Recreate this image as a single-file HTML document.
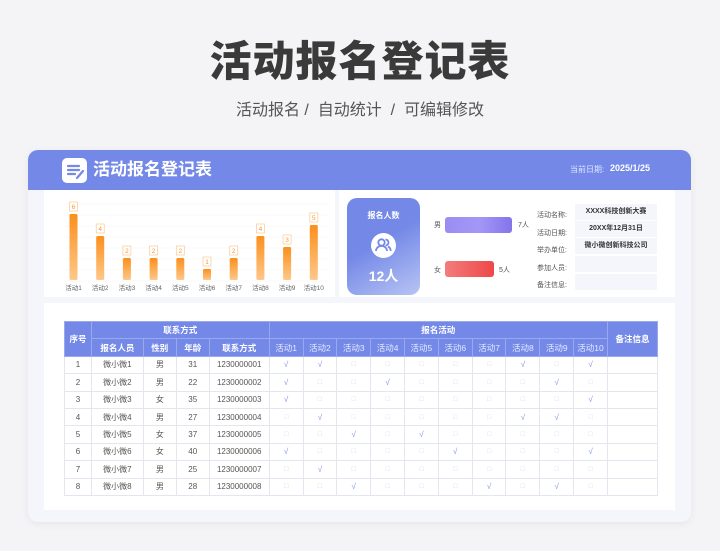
<!DOCTYPE html>
<html><head><meta charset="utf-8"><style>
*{margin:0;padding:0;box-sizing:border-box}
body{width:720px;height:551px;background:#f4f4f6;font-family:"Liberation Sans","Noto Sans CJK SC",sans-serif;position:relative;overflow:hidden}
.a{position:absolute}
.title{left:0;width:720px;top:34px;text-align:center;font-size:42px;font-weight:900;color:#3a3a3a;letter-spacing:1px;line-height:56px}
.sub{left:0;width:720px;top:100px;text-align:center;font-size:16px;color:#555;line-height:22px}
.card{left:28px;top:150px;width:663px;height:372px;background:#f5f6fb;border-radius:10px;overflow:hidden;box-shadow:0 2px 8px rgba(0,0,0,.06)}
.hdr{left:0;top:0;width:663px;height:40px;background:#7489e7}
.panel{background:#fff}
table{border-collapse:collapse;font-size:8px;color:#555}
td,th{border:1px solid #e3e6ee;text-align:center;height:17.4px;padding:0}
th{background:#7489e7;color:#fff;font-weight:bold;border-color:#9aa9ee;font-size:8.5px}
th.n{font-weight:normal;color:#e6eaff}
.ck{color:#7b8ce8}.bx{color:#d8dbe6;font-size:7px}
.lab{font-size:7px;color:#555}
</style></head><body>
<div class="a title">活动报名登记表</div>
<div class="a sub">活动报名 / &nbsp;自动统计 &nbsp;/ &nbsp;可编辑修改</div>
<div class="a card">
 <div class="a hdr">
  <div class="a" style="left:34px;top:8px;width:25px;height:25px;background:#fff;border-radius:5px">
   <svg width="25" height="25" viewBox="0 0 25 25"><path d="M6 8h11M6 12h11M6 16h7" stroke="#7489e7" stroke-width="2.2" stroke-linecap="round"/><path d="M15 20l6-7" stroke="#7489e7" stroke-width="2.2" stroke-linecap="round"/></svg>
  </div>
  <div class="a" style="left:65px;top:8px;font-size:17px;font-weight:bold;color:#fff;line-height:24px">活动报名登记表</div>
  <div class="a" style="left:542px;top:14px;font-size:8px;color:#dfe4ff">当前日期:</div>
  <div class="a" style="left:582px;top:13px;font-size:9px;font-weight:bold;color:#fff">2025/1/25</div>
 </div>
 <div class="a panel" style="left:16px;top:40px;width:291px;height:107px"></div>
 <div class="a panel" style="left:311px;top:40px;width:336px;height:107px"></div>
 <div class="a panel" style="left:16px;top:153px;width:631px;height:207px"></div>
</div>
<svg class="a" style="left:44px;top:190px" width="291" height="106">
 <defs><linearGradient id="og" x1="0" y1="0" x2="0" y2="1"><stop offset="0" stop-color="#fb8f1c"/><stop offset="1" stop-color="#fec889"/></linearGradient></defs>
 <g stroke="#f4f4f4" stroke-width="0.6"><line x1="20" x2="284" y1="14" y2="14"/><line x1="20" x2="284" y1="25" y2="25"/><line x1="20" x2="284" y1="36" y2="36"/><line x1="20" x2="284" y1="47" y2="47"/><line x1="20" x2="284" y1="58" y2="58"/><line x1="20" x2="284" y1="69" y2="69"/><line x1="20" x2="284" y1="80" y2="80"/><line x1="20" x2="284" y1="91" y2="91"/></g>
 <g font-size="6.5" fill="#666" text-anchor="middle" font-family="Liberation Sans,Noto Sans CJK SC,sans-serif">
 <g id="bars"></g>
 </g>
</svg>
<script>
var v=[6,4,2,2,2,1,2,4,3,5],s='';
for(var i=0;i<10;i++){var cx=29.5+i*26.7,h=v[i]*11,t=90-h;
s+='<rect x="'+(cx-4)+'" y="'+t+'" width="8" height="'+h+'" rx="1.5" fill="url(#og)"/>';
s+='<rect x="'+(cx-4)+'" y="'+(t-12)+'" width="8" height="9" fill="#fff" stroke="#fbc98e" stroke-width="0.7"/>';
s+='<text x="'+cx+'" y="'+(t-5)+'" fill="#f59a3a">'+v[i]+'</text>';
s+='<text x="'+cx+'" y="100">活动'+(i+1)+'</text>';}
document.getElementById('bars').innerHTML=s;
</script>
<div class="a" style="left:347px;top:198px;width:73px;height:97px;border-radius:10px;background:linear-gradient(150deg,#7489e7 45%,#b8c4f4)">
 <div class="a" style="left:0;width:73px;top:12px;text-align:center;font-size:8px;color:#fff;font-weight:bold">报名人数</div>
 <div class="a" style="left:24px;top:35px;width:25px;height:25px;border-radius:50%;background:#fff">
  <svg width="25" height="25" viewBox="0 0 25 25" fill="none" stroke="#7489e7" stroke-width="1.8"><circle cx="10.5" cy="9.5" r="3.2"/><path d="M5 18c0-3 2.5-5 5.5-5s5.5 2 5.5 5"/><path d="M14.5 6.5a3 3 0 0 1 0 6M17 13.5c1.5.7 2.7 2.2 2.7 4.5"/></svg>
 </div>
 <div class="a" style="left:0;width:73px;top:68px;text-align:center;font-size:14px;color:#fff;font-weight:bold">12人</div>
</div>
<div class="a lab" style="left:434px;top:220px">男</div>
<div class="a" style="left:445px;top:217px;width:67px;height:16px;border-radius:3px;background:linear-gradient(90deg,#9a8cf3,#a597f7 50%,#8474ea)"></div>
<div class="a lab" style="left:518px;top:220px">7人</div>
<div class="a lab" style="left:434px;top:265px">女</div>
<div class="a" style="left:445px;top:261px;width:49px;height:16px;border-radius:3px;background:linear-gradient(90deg,#f27d7d,#ef4747)"></div>
<div class="a lab" style="left:499px;top:265px">5人</div>
<div class="a" style="left:537px;top:207px;font-size:7px;color:#555;line-height:17.5px">活动名称:<br>活动日期:<br>举办单位:<br>参加人员:<br>备注信息:</div>
<div class="a" style="left:575px;top:204px;width:82px;height:16px;background:#f4f6fc;font-size:7px;font-weight:bold;color:#333;text-align:center;line-height:16px">XXXX科技创新大赛</div>
<div class="a" style="left:575px;top:221px;width:82px;height:16px;background:#f4f6fc;font-size:7px;font-weight:bold;color:#333;text-align:center;line-height:16px">20XX年12月31日</div>
<div class="a" style="left:575px;top:238px;width:82px;height:16px;background:#f4f6fc;font-size:7px;font-weight:bold;color:#333;text-align:center;line-height:16px">微小微创新科技公司</div>
<div class="a" style="left:575px;top:256px;width:82px;height:16px;background:#f4f6fc"></div>
<div class="a" style="left:575px;top:274px;width:82px;height:16px;background:#f4f6fc"></div>
<table class="a" style="left:64px;top:321px;width:594px">
<colgroup><col style="width:27px"><col style="width:52px"><col style="width:33px"><col style="width:33px"><col style="width:60px"><col span="10" style="width:33.9px"><col style="width:50px"></colgroup>
<thead>
<tr><th rowspan="2">序号</th><th colspan="4">联系方式</th><th colspan="10">报名活动</th><th rowspan="2">备注信息</th></tr>
<tr><th>报名人员</th><th>性别</th><th>年龄</th><th>联系方式</th><th class="n">活动1</th><th class="n">活动2</th><th class="n">活动3</th><th class="n">活动4</th><th class="n">活动5</th><th class="n">活动6</th><th class="n">活动7</th><th class="n">活动8</th><th class="n">活动9</th><th class="n">活动10</th></tr>
</thead>
<tbody id="tb"></tbody>
</table>
<script>
var g=['男','男','女','男','女','女','男','男'],a=[31,22,35,27,37,40,25,28],
c=[[1,2,8,10],[1,4,9],[1,10],[2,8,9],[3,5],[1,6,10],[2],[3,7,9]],h='';
for(var r=0;r<8;r++){h+='<tr><td>'+(r+1)+'</td><td>微小微'+(r+1)+'</td><td>'+g[r]+'</td><td>'+a[r]+'</td><td>123000000'+(r+1)+'</td>';
for(var k=1;k<=10;k++)h+=c[r].indexOf(k)>=0?'<td class="ck">√</td>':'<td class="bx">□</td>';
h+='<td></td></tr>';}
document.getElementById('tb').innerHTML=h;
</script>
</body></html>
